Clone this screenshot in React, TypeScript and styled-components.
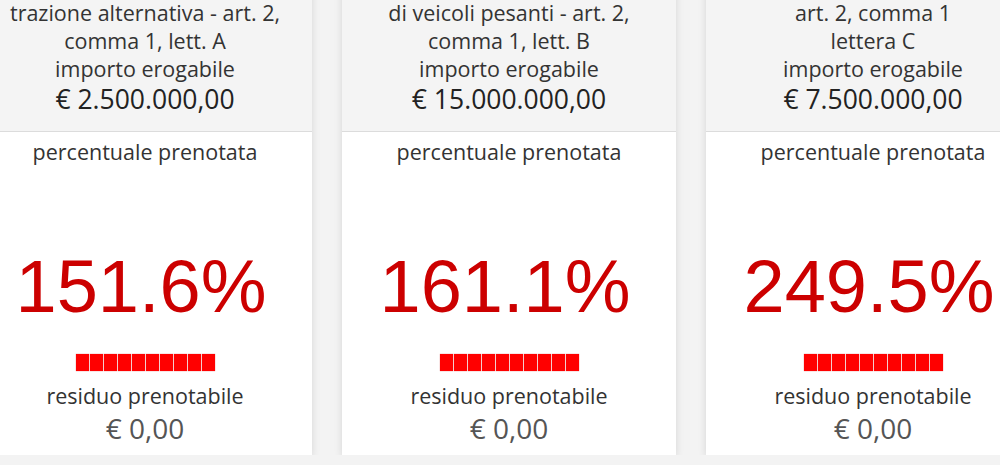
import React from 'react';
import styled, { createGlobalStyle } from 'styled-components';

const GlobalStyle = createGlobalStyle`
    html, body {
        margin: 0;
        padding: 0;
        background: #f3f3f3;
        overflow: hidden;
    }
    body {
        font-family: 'Open Sans', 'Noto Sans', sans-serif;
        color: #333;
    }
`;

const CardRow = styled.div`
    display: flex;
    gap: 30px;
    margin: -10px 0 0 -22px;
`;

const Card = styled.div`
    flex: 0 0 334px;
    background: #fff;
    box-shadow: 0 2px 8px rgba(0, 0, 0, 0.12);
    display: flex;
    flex-direction: column;
    height: 465px;
`;

const CardHeader = styled.div`
    background: #f4f4f4;
    border-bottom: 1px solid #dcdcdc;
    padding: 9px 6px 0;
    height: 142px;
    box-sizing: border-box;
    text-align: center;
`;

const HeaderLine = styled.div`
    font-size: 21.5px;
    line-height: 28px;
    white-space: nowrap;
`;

const Amount = styled.div`
    font-size: 26.5px;
    line-height: 32px;
    color: #222;
    white-space: nowrap;
`;

const CardBody = styled.div`
    display: flex;
    flex-direction: column;
    align-items: center;
    text-align: center;
`;

const Label = styled.div`
    font-size: 21.5px;
    line-height: 27px;
    margin-top: 6px;
`;

const Percent = styled.div`
    font-family: 'Liberation Sans', Arial, sans-serif;
    font-size: 74px;
    line-height: 84px;
    color: #cc0000;
    margin-top: 80px;
    padding-right: 8px;
`;

const Bar = styled.div`
    display: flex;
    gap: 1px;
    margin-top: 25px;
`;

const Block = styled.span`
    width: 13px;
    height: 17px;
    background: #ff0000;
    box-shadow: 0 0 1px rgba(200, 0, 0, 0.6);
`;

const Residual = styled.div`
    font-size: 21.5px;
    line-height: 27px;
    margin-top: 11px;
`;

const ResidualAmount = styled.div`
    font-size: 28px;
    line-height: 34px;
    color: #555;
    margin-top: 2px;
`;

type CardData = { lines: string[]; amount: string; percent: string };

const cards: CardData[] = [
    { lines: ['trazione alternativa - art. 2,', 'comma 1, lett. A'], amount: '€ 2.500.000,00', percent: '151.6%' },
    { lines: ['di veicoli pesanti - art. 2,', 'comma 1, lett. B'], amount: '€ 15.000.000,00', percent: '161.1%' },
    { lines: ['art. 2, comma 1', 'lettera C'], amount: '€ 7.500.000,00', percent: '249.5%' },
];

const FundCard: React.FC<{ data: CardData }> = ({ data }) => (
    <Card>
        <CardHeader>
            {data.lines.map((l) => <HeaderLine key={l}>{l}</HeaderLine>)}
            <HeaderLine>importo erogabile</HeaderLine>
            <Amount>{data.amount}</Amount>
        </CardHeader>
        <CardBody>
            <Label>percentuale prenotata</Label>
            <Percent>{data.percent}</Percent>
            <Bar>
                {Array.from({ length: 10 }).map((_, i) => <Block key={i} />)}
            </Bar>
            <Residual>residuo prenotabile</Residual>
            <ResidualAmount>€ 0,00</ResidualAmount>
        </CardBody>
    </Card>
);

const App: React.FC = () => (
    <>
        <GlobalStyle />
        <CardRow>
            {cards.map((c) => <FundCard key={c.percent} data={c} />)}
        </CardRow>
    </>
);

export default App;
